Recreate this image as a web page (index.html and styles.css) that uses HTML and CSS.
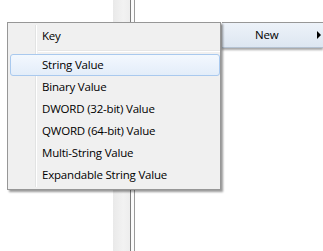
FILE: index.html
```html
<!DOCTYPE html>
<html>
<head>
<meta charset="utf-8">
<link rel="stylesheet" href="styles.css">
</head>
<body>
<div class="pane-row">
  <div class="pane-left"></div>
  <div class="splitter"></div>
  <div class="split-line"></div>
  <div class="split-gap"></div>
  <div class="split-line light"></div>
  <div class="pane-right"></div>
</div>

<div class="parent-item">
  <span class="parent-label">New</span>
  <span class="arrow"></span>
</div>

<div class="menu">
  <div class="item">Key</div>
  <div class="sep"></div>
  <div class="item hover">String Value</div>
  <div class="item">Binary Value</div>
  <div class="item">DWORD (32-bit) Value</div>
  <div class="item">QWORD (64-bit) Value</div>
  <div class="item">Multi-String Value</div>
  <div class="item">Expandable String Value</div>
</div>
</body>
</html>
```

FILE: styles.css
```css
html, body {
  margin: 0;
  padding: 0;
}
body {
  width: 323px;
  height: 251px;
  overflow: hidden;
  position: relative;
  background: #ffffff;
  font-family: "Open Sans", "Noto Sans", sans-serif;
  font-size: 11.5px;
  letter-spacing: -0.2px;
  color: #000;
}
.pane-row {
  display: flex;
  height: 251px;
}
.pane-left {
  width: 113px;
}
.splitter {
  width: 17px;
  background: linear-gradient(to right, #e9e9e9, #f2f2f2 60%, #ededed);
}
.split-line {
  width: 1px;
  background: #7d7d7d;
}
.split-line.light {
  background: #9a9a9a;
}
.split-gap {
  width: 3px;
  background: #fbfbfb;
}
.pane-right {
  flex: 1;
}

.parent-item {
  position: absolute;
  left: 222px;
  top: 22px;
  width: 101px;
  height: 24px;
  border-top: 1px solid #979797;
  border-bottom: 1px solid #b4c2d2;
  background: linear-gradient(#edf2f9, #dde6f1);
  box-shadow: 0 2px 2px rgba(0, 0, 0, 0.35);
  display: flex;
  align-items: center;
}
.parent-label {
  margin-left: 33px;
  margin-top: -1px;
}
.arrow {
  margin-left: auto;
  margin-right: 2px;
  width: 0;
  height: 0;
  border-top: 4px solid transparent;
  border-bottom: 4px solid transparent;
  border-left: 4px solid #000;
}

.menu {
  position: absolute;
  left: 7px;
  top: 22px;
  width: 210px;
  padding: 2px 0 3px 2px;
  border: 1px solid #979797;
  background: #f0f0f0;
  box-shadow: 2px 2px 2px rgba(0, 0, 0, 0.4);
  z-index: 2;
}
.menu::before {
  content: "";
  position: absolute;
  left: 27px;
  top: 2px;
  bottom: 2px;
  width: 1px;
  background: #e2e3e3;
  box-shadow: 1px 0 0 #ffffff;
}
.item {
  position: relative;
  height: 20px;
  line-height: 19px;
  padding-left: 31px;
  border: 1px solid transparent;
  border-radius: 3px;
}
.item.hover {
  border-color: #a9c9ee;
  background: linear-gradient(#f3f8fe, #e3edf9);
}
.sep {
  position: relative;
  height: 7px;
}
.sep::after {
  content: "";
  position: absolute;
  left: 28px;
  right: 0;
  top: 3px;
  height: 1px;
  background: #e6e6e6;
  box-shadow: 0 1px 0 #ffffff;
}
```
